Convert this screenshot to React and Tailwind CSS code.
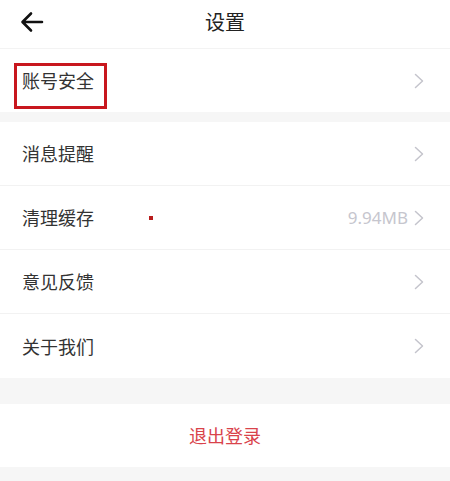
import React from "react";

const Chevron = () => (
  <svg width="10" height="16" viewBox="0 0 10 16" fill="none" className="shrink-0">
    <path d="M1.5 1.5L8.5 8L1.5 14.5" stroke="#c4c4cc" strokeWidth="1.5" strokeLinecap="round" strokeLinejoin="round" />
  </svg>
);

const Row = ({ label, value, border = true, children }) => (
  <div className={`relative flex h-[64px] items-center justify-between bg-white pl-[22px] pr-[26px] ${border ? "border-b border-[#f2f2f2]" : ""}`}>
    <span className="text-[18px] text-[#333333]">{label}</span>
    <div className="flex items-center gap-[6px]">
      {value && <span className="text-[17px] text-[#c6c6ce]" style={{ fontFamily: '"Noto Sans", sans-serif' }}>{value}</span>}
      <Chevron />
    </div>
    {children}
  </div>
);

export default function App() {
  return (
    <div
      className="min-h-[481px] w-[450px] bg-[#f6f6f6]"
      style={{ fontFamily: '"Noto Sans CJK SC", "Noto Sans", sans-serif' }}
    >
      <div className="relative flex h-[49px] items-center justify-center border-b border-[#f3f3f3] bg-white pb-[5px]">
        <svg className="absolute left-[20px] top-[11px]" width="24" height="22" viewBox="0 0 24 22" fill="none">
          <path d="M22 11H3M11 2.5L2.5 11L11 19.5" stroke="#111" strokeWidth="2.6" strokeLinecap="round" strokeLinejoin="round" />
        </svg>
        <span className="text-[20px] text-[#222]">设置</span>
      </div>

      <div className="relative flex h-[63px] items-center justify-between bg-white pl-[22px] pr-[26px]">
        <span className="text-[18px] text-[#333333]">账号安全</span>
        <Chevron />
        <div className="absolute left-[14px] top-[14px] h-[46px] w-[93px] border-[3px] border-[#c8171e]" />
      </div>

      <div className="mt-[10px]">
        <Row label="消息提醒" />
        <Row label="清理缓存" value="9.94MB">
          <div className="absolute left-[149px] top-[30px] h-[4px] w-[4px] bg-[#b81c1c]" />
        </Row>
        <Row label="意见反馈" />
        <Row label="关于我们" border={false} />
      </div>

      <div className="mt-[26px] flex h-[63px] items-center justify-center bg-white">
        <span className="text-[18px] text-[#d9434b]">退出登录</span>
      </div>
    </div>
  );
}
